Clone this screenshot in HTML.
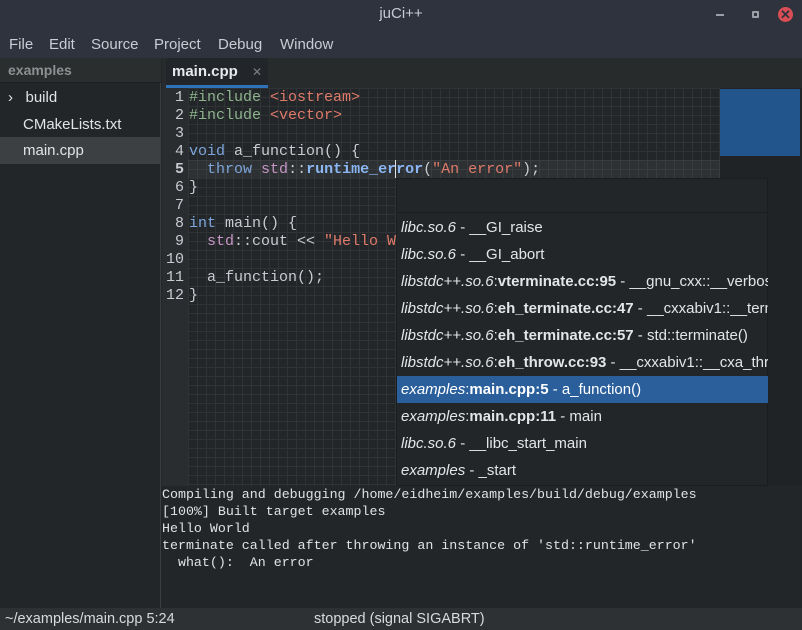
<!DOCTYPE html>
<html><head><style>
*{margin:0;padding:0;box-sizing:border-box}
body{width:802px;height:630px;background:#232629;font-family:"Liberation Sans",sans-serif;position:relative;overflow:hidden;color:#d0d4d8}
.abs{position:absolute}
.title{left:0;top:0;width:802px;height:30px;background:#2f333e;color:#c8ccd4;font-size:15px;text-align:center;line-height:28px}
.menu{left:0;top:30px;width:802px;height:28px;background:#2f333e;font-size:15px;color:#c8ccd4}
.menu span{position:absolute;top:6px}
.side{left:0;top:58px;width:161px;height:550px;background:#232629;border-right:1px solid #3a3e40}
.sidehead{left:0;top:58px;width:161px;height:25px;background:#2a2e2f;color:#8c9092;font-size:14px;font-weight:bold;padding:4px 8px;border-bottom:1px solid #1c1f20}
.tree{font-size:15px;color:#e0e4e6;left:0;width:160px;height:27px;line-height:27px}
.tabbar{left:162px;top:58px;width:640px;height:30px;background:#272b2b}
.tab{left:166px;top:58px;width:102px;height:30px;background:#22262a;border-bottom:3px solid #2e72b8;border-radius:3px 3px 0 0}
.code{left:188px;top:88px;width:532px;height:398px;background-color:#232629;
background-image:linear-gradient(#2f3336 1px,transparent 1px),linear-gradient(90deg,#2f3336 1px,transparent 1px);background-size:9px 9px}
.gut{left:162px;top:88px;width:26px;height:398px;background:#2a2d30}
.mono{font-family:"Liberation Mono",monospace;font-size:15px;line-height:18px;white-space:pre}
.ln{left:162px;top:89px;width:22px;text-align:right;color:#c8ccd0}
.src{left:189px;top:89px;color:#c8ccd0}
.g{color:#8eb58e}.r{color:#e07a6a}.b{color:#7ea6dc}.p{color:#c596c4}.bb{color:#8ab6f2;font-weight:bold}
.pop{left:396px;top:178px;width:372px;height:308px;background:#232629;border:1px solid #1b1e20}
.item{left:0;width:371px;height:27px;line-height:27px;padding-left:4px;font-size:15px;color:#e2e6e8;white-space:nowrap;overflow:hidden}
.item i{font-style:italic}
.term{left:162px;top:486px;width:640px;height:122px;background:#232629;font-family:"Liberation Mono",monospace;font-size:13.3px;line-height:17px;color:#e0e2e4;white-space:pre;padding-top:0}
.status{left:0;top:608px;width:802px;height:22px;background:#2e3134;font-size:14.5px;color:#d8dadc;line-height:22px}
</style></head><body>
<div class="abs title">juCi++</div>
<div class="abs" style="left:716px;top:14px;width:8px;height:2px;background:#9aa0a8"></div>
<div class="abs" style="left:752px;top:11px;width:7px;height:7px;border:2px solid #9aa0a8;border-radius:1px"></div>
<div class="abs" style="left:778px;top:7px;width:15px;height:15px;border-radius:50%;background:#d94e55;color:#2f333e;font-size:13px;line-height:15px;text-align:center;font-weight:bold">✕</div>
<div class="abs menu"><span style="left:9px">File</span><span style="left:49px">Edit</span><span style="left:91px">Source</span><span style="left:154px">Project</span><span style="left:218px">Debug</span><span style="left:280px">Window</span></div>
<div class="abs side"></div>
<div class="abs sidehead">examples</div>
<div class="abs tree" style="top:84px;padding-left:8px">›&nbsp;&nbsp; build</div>
<div class="abs tree" style="top:111px;padding-left:23px">CMakeLists.txt</div>
<div class="abs tree" style="top:137px;padding-left:23px;background:#3c4042">main.cpp</div>
<div class="abs tabbar"></div>
<div class="abs tab"><span class="abs" style="left:6px;top:5px;font-size:15px;font-weight:bold;color:#e6eaec">main.cpp</span><span class="abs" style="left:86px;top:7px;font-size:12px;color:#7c8084">✕</span></div>
<div class="abs gut"></div>
<div class="abs code"></div>
<div class="abs" style="left:720px;top:88px;width:82px;height:398px;background:#202326"></div>
<div class="abs" style="left:720px;top:89px;width:80px;height:67px;background:#22558c"></div>
<div class="abs" style="left:188px;top:160px;width:532px;height:18px;background:rgba(255,255,255,0.05)"></div>
<div class="abs mono ln">1
2
3
4
<b>5</b>
6
7
8
9
10
11
12</div>
<div class="abs mono src"><span class="g">#include</span> <span class="r">&lt;iostream&gt;</span>
<span class="g">#include</span> <span class="r">&lt;vector&gt;</span>

<span class="b">void</span> a_function() {
  <span class="b">throw</span> <span class="p">std</span>::<span class="bb">runtime_error</span>(<span class="r">"An error"</span>);
}

<span class="b">int</span> main() {
  <span class="p">std</span>::cout &lt;&lt; <span class="r">"Hello W</span>

  a_function();
}</div>
<div class="abs" style="left:395px;top:160px;width:1px;height:18px;background:#e0e0e0"></div>
<div class="abs pop">
<div class="abs" style="left:0;top:33px;width:370px;height:1px;background:#1a1d1f"></div>
<div class="abs item" style="top:35px"><i>libc.so.6</i> - __GI_raise</div>
<div class="abs item" style="top:62px"><i>libc.so.6</i> - __GI_abort</div>
<div class="abs item" style="top:89px"><i>libstdc++.so.6</i>:<b>vterminate.cc:95</b> - __gnu_cxx::__verbose_terminate_handler()</div>
<div class="abs item" style="top:116px"><i>libstdc++.so.6</i>:<b>eh_terminate.cc:47</b> - __cxxabiv1::__terminate()</div>
<div class="abs item" style="top:143px"><i>libstdc++.so.6</i>:<b>eh_terminate.cc:57</b> - std::terminate()</div>
<div class="abs item" style="top:170px"><i>libstdc++.so.6</i>:<b>eh_throw.cc:93</b> - __cxxabiv1::__cxa_throw</div>
<div class="abs item" style="top:197px;background:#2a5f9c;color:#fff"><i>examples</i>:<b>main.cpp:5</b> - a_function()</div>
<div class="abs item" style="top:224px"><i>examples</i>:<b>main.cpp:11</b> - main</div>
<div class="abs item" style="top:251px"><i>libc.so.6</i> - __libc_start_main</div>
<div class="abs item" style="top:278px"><i>examples</i> - _start</div>
</div>
<div class="abs term">Compiling and debugging /home/eidheim/examples/build/debug/examples
[100%] Built target examples
Hello World
terminate called after throwing an instance of 'std::runtime_error'
  what():  An error</div>
<div class="abs status"><span class="abs" style="left:5px">~/examples/main.cpp 5:24</span><span class="abs" style="left:314px">stopped (signal SIGABRT)</span></div>
</body></html>
